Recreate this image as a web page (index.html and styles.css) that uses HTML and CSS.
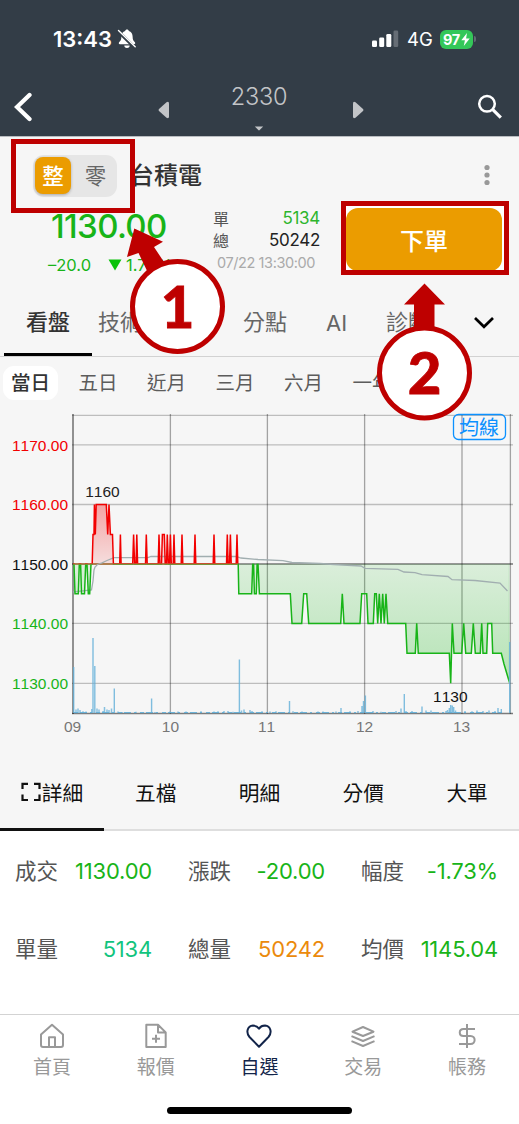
FILE: index.html
```html
<!DOCTYPE html>
<html lang="zh-Hant">
<head>
<meta charset="utf-8">
<meta name="viewport" content="width=device-width, initial-scale=1">
<title>台積電 2330</title>
<link rel="stylesheet" href="styles.css">
</head>
<body>
<div class="app">
  <header class="top">
    <div class="status">
      <span class="clock">13:43</span>
      <svg class="bell" width="20" height="22" viewBox="0 0 20 22"><path d="M10 1.500C11 1.500 11.600 2.100 11.800 2.900 14.300 3.700 15.600 5.800 15.600 8.500 15.600 12 16.600 13 17.900 14.300 18.600 15.200 18.200 16.200 17.100 16.200H2.900C1.800 16.200 1.400 15.200 2.100 14.300 3.400 13 4.400 12 4.400 8.500 4.400 5.800 5.700 3.700 8.200 2.900 8.400 2.100 9 1.500 10 1.500zM7.300 17.500H12.700A2.700 2.500 0 0 1 7.300 17.500z" fill="#fff"/><path d="M.8 3 18 19.800" stroke="#333d47" stroke-width="3.200"/><path d="M1.500 2.500 18.200 18.800" stroke="#fff" stroke-width="1.400" stroke-linecap="round"/></svg>
      <svg class="signal" width="27" height="18" viewBox="0 0 27 18"><g fill="#fff"><rect x="0" y="10.500" width="5" height="6.500" rx="1.300"/><rect x="7.200" y="7.500" width="5" height="9.500" rx="1.300"/><rect x="14.300" y="4" width="5" height="13" rx="1.300"/><rect x="21.500" y=".500" width="4.700" height="16.500" rx="1.300" opacity=".25"/></g></svg>
      <span class="net">4G</span>
      <span class="battery"><span>97</span><svg width="9" height="13" viewBox="0 0 9 13"><path d="M6 0 .3 7.300h3.600L2.800 13 8.700 5.400H5.100z" fill="#fff"/></svg></span>
      <i class="nub"></i>
    </div>
    <div class="nav">
      <svg class="back" width="18" height="30" viewBox="0 0 18 30"><path d="M15.500 3 3 15l12.500 12" fill="none" stroke="#fff" stroke-width="4.300" stroke-linecap="round" stroke-linejoin="miter"/></svg>
      <svg class="prev" width="12" height="18" viewBox="0 0 12 18"><path d="M8.500 1.200 1 8q-1 1 0 2l7.500 6.800q2.500 1.200 2.500-1.200V2.400q0-2.400-2.500-1.200z" fill="#c3c5c8"/></svg>
      <div class="symbol"><span>2330</span><svg width="10" height="5" viewBox="0 0 10 5"><path d="M.8.500h8.400L5.700 4.100q-.7.700-1.400 0z" fill="#c3c5c8"/></svg></div>
      <svg class="next" width="12" height="18" viewBox="0 0 12 18"><path d="M3.500 1.200 11 8q1 1 0 2l-7.500 6.800Q1 18 1 15.600V2.400Q1 0 3.500 1.200z" fill="#c3c5c8"/></svg>
      <svg class="search" width="26" height="26" viewBox="0 0 26 26" fill="none" stroke="#fff"><circle cx="10" cy="9.800" r="7.800" stroke-width="2.500"/><path d="M15.800 15.600 23.800 23.600" stroke-width="3.200"/></svg>
    </div>
  </header>

  <section class="quote">
    <div class="name-row">
      <div class="lot"><span class="lot-on">整</span><span class="lot-off">零</span></div>
      <h1>台積電</h1>
      <svg class="more" width="8" height="22" viewBox="0 0 8 22" fill="#999"><circle cx="4" cy="3.500" r="2.600"/><circle cx="4" cy="11" r="2.600"/><circle cx="4" cy="18.500" r="2.600"/></svg>
    </div>
    <div class="price-row">
      <div class="price">
        <div class="last">1130.00</div>
        <div class="change"><span class="diff">–20.0</span><svg width="14" height="12" viewBox="0 0 14 12"><path d="M.5.500h13L7 11.500z" fill="#0ac20a"/></svg><span>1.73%</span></div>
      </div>
      <div class="volume">
        <div class="vol-line"><span>單</span><b class="green">5134</b></div>
        <div class="vol-line"><span>總</span><b>50242</b></div>
        <div class="stamp">07/22 13:30:00</div>
      </div>
      <div class="order-wrap"><button class="order">下單</button></div>
    </div>
  </section>

  <nav class="tabs">
    <span class="on">看盤</span><span>技術</span><span class="branch">分點</span><span class="ai">AI</span><span class="diagnosis">診斷</span>
    <svg width="22" height="14" viewBox="0 0 22 14"><path d="m2 2 9 8.800L20 2" fill="none" stroke="#000" stroke-width="2.700"/></svg>
  </nav>
  <div class="ranges"><span class="on">當日</span><span>五日</span><span>近月</span><span>三月</span><span>六月</span><span>一年</span></div>

  <svg class="chart" width="519" height="349" viewBox="0 405 519 349">
    <defs>
      <linearGradient id="up" gradientUnits="userSpaceOnUse" x1="0" y1="504" x2="0" y2="564"><stop offset="0" stop-color="#f00000" stop-opacity=".34"/><stop offset="1" stop-color="#f00000" stop-opacity=".1"/></linearGradient>
      <linearGradient id="down" gradientUnits="userSpaceOnUse" x1="0" y1="564" x2="0" y2="683"><stop offset="0" stop-color="#12b412" stop-opacity=".12"/><stop offset="1" stop-color="#12b412" stop-opacity=".29"/></linearGradient>
      <clipPath id="above"><rect x="73" y="400" width="440" height="164"/></clipPath>
      <clipPath id="below"><rect x="73" y="564" width="440" height="150"/></clipPath>
      <path id="trace" d="M73 564H74L75 593.700H78.300L79.300 564H80.600L81.500 593.700H84.500L85.700 564H87L88.300 593.700H89.700L91 564H92.200L93 534.500H94L94.400 504.500 95.300 534.500 96.200 504.500H106.300L107.700 534.500 109 504.500 110.400 534.500H112.500L113.400 564H119.700L120.400 534.500 121.100 564H132.700L133.600 534.500 134.600 564H136L136.800 534.500 137.600 564H145.500L146.300 534.500 147.200 564H158.200L159 534.500 159.900 564H161.500L162.400 534.500H164.300L165.200 564H166.500L167.300 534.500 168.300 564H169.500L170.400 534.500 171.300 564H173.200L174 534.500 174.800 564H181.200L182 534.500 182.800 564H194.200L195 534.500 195.800 564H213.200L214 534.500 214.800 564H226.500L227.300 534.500 228.100 564H229.500L230.400 534.500 231.200 564H236.200L237 534.500 237.800 564H238.200L238.800 593.700H251.700L252.700 564H253.600L254.400 593.700H256.300L257.100 564H258L259.400 593.700H290.300L292 623.400H301.700L303.700 593.700H306.700L308.700 623.400H340.700L342.300 593.700 344 623.400H360L361.700 593.700H366.700L368 623.400H373.300L374.700 593.700H376.300L377.700 623.400 379.300 593.700 381 623.400 382.700 593.700 384.300 623.400 386 593.700 387.700 623.400H405.700L407 653.200H415.300L416.700 623.400 418.300 653.200H449.300L450.700 683.200 452.300 623.400 454 653.200H461.700L463.700 623.400 465.700 653.200H471.300L473.300 623.400 475.300 653.200H480.300L481.700 623.400 483 653.200H486.700L487.700 623.400H491.700L492.700 653.200H501.300L504 664 509.700 683.200V564"/>
    </defs>
    <g stroke="#000" stroke-opacity=".23" stroke-width="1.300">
      <path d="M72 415.300H513M72 444.900H513M72 504.500H513M72 623.400H513M72 683.300H513"/>
      <path d="M170.400 414V714M267.400 414V714M364.600 414V714M462 414V714M510.400 414V714" stroke-opacity=".34"/>
      <path d="M72 564H513" stroke-opacity=".52"/>
      <path d="M73 414V714" stroke-opacity=".55" stroke-width="1.500"/>
      <path d="M72 713.500H513" stroke-opacity=".5"/>
    </g>
    <use href="#trace" fill="url(#up)" clip-path="url(#above)"/>
    <use href="#trace" fill="url(#down)" clip-path="url(#below)"/>
    <path d="M73 564H238" stroke="#b4793a" stroke-width="1.500"/>
    <path d="M73.700 713V667M93 713V638M94.800 713V666M114.300 713V688.500M151.600 713V698.600M239.400 713V659.500M289.500 713V701M341 713V708M362 713V706M363.500 713V701M365.400 713V695.500M401 713V708.500M404.300 713V694M422 713V706.500M449.300 713V708M450.700 713V705M452.300 713V705.500M453.700 713V707M498 713V708M501.300 713V709M509.700 713V642" stroke="#62afd8" stroke-opacity=".8" stroke-width="1.400"/>
    <path d="M76 713V709.500M78 713V708.500M80 713V710M83 713V711.200M86 713V711.400M91.800 713V709M97 713V708.500M99 713V709.500M103 713V711M104.500 713V707M107 713V709.500M109 713V710M111.500 713V708.500M118 713V711.500M122 713V712M136 713V711.700M155 713V712M170 713V711.500M178 713V711.500M186 713V711.500M201 713V711.300M214 713V711.500M218 713V711.300M224 713V711M228 713V711M233 713V711.700M241.500 713V710.500M244 713V709.500M250 713V710M252 713V711M262 713V711.300M270 713V711.500M276 713V711.300M293 713V711.300M302 713V711.500M318 713V711.500M323 713V711.500M336 713V711.500M350 713V711.300M358 713V711M373 713V711M381 713V711.700M396 713V711M406 713V711M412 713V711M426 713V710.500M431 713V710.500M446 713V711M447.500 713V710M455.500 713V710.500M465 713V711M472 713V711.300M477 713V710.500M483 713V711M489 713V710.500M495 713V711" stroke="#62afd8" stroke-opacity=".75" stroke-width="1.500"/>
    <path d="M74 712.600H502" stroke="#62afd8" stroke-width="1" stroke-dasharray="4 2 7 3 2 4"/>
    <path d="M73 592 78 591.300 91.500 590 93 581 94 570 95 567 97.500 564.500 102 562.800 107 560.500 114 557.700H148L151 556.500H236L241 558 258 559.500 283 560.700 292 562.500 320 563.500 334 564.500 361 566 365 568.300 398 569.300 404 572 415 572.700 422 574.700 448 576.500 452 579.700 475 580.500 500 583 507.500 591" fill="none" stroke="#a1aeb0" stroke-width="1.300"/>
    <clipPath id="up-line"><rect x="73" y="500" width="166" height="63.600"/></clipPath>
    <clipPath id="down-line"><path d="M73 564.500H238V563.500H260V564.500H508.900V690H73z"/></clipPath>
    <use href="#trace" fill="none" stroke="#f20000" stroke-width="1.500" clip-path="url(#up-line)"/>
    <use href="#trace" fill="none" stroke="#18b418" stroke-width="1.500" clip-path="url(#down-line)"/>
    <g class="axis" text-anchor="end">
      <text x="68" y="450.500" fill="#f20000">1170.00</text>
      <text x="68" y="510" fill="#f20000">1160.00</text>
      <text x="68" y="569.500" fill="#111">1150.00</text>
      <text x="68" y="629" fill="#18b418">1140.00</text>
      <text x="68" y="688.900" fill="#18b418">1130.00</text>
    </g>
    <g class="axis" text-anchor="middle">
      <text x="102.500" y="497" fill="#222">1160</text>
      <text x="450.300" y="702" fill="#111">1130</text>
      <g fill="#777"><text x="72.500" y="731.800">09</text><text x="170.400" y="731.800">10</text><text x="266.500" y="731.800">11</text><text x="364.500" y="731.800">12</text><text x="461.500" y="731.800">13</text></g>
    </g>
    <rect x="453.500" y="414.500" width="52" height="25" rx="5" fill="none" stroke="#0c91ff" stroke-width="1.300"/>
    <text class="ma" x="479" y="435" text-anchor="middle" fill="#0c91ff">均線</text>
  </svg>

  <nav class="detail-tabs">
    <span class="on"><svg width="20" height="20" viewBox="0 0 20 20"><path d="M7 1.800H1.500V7M13 1.800H18.500V7M1.500 12.500V18H7M18.500 12.500V18H13" fill="none" stroke="#111" stroke-width="2.200"/></svg>詳細</span><span>五檔</span><span>明細</span><span>分價</span><span>大單</span>
  </nav>

  <section class="stats">
    <div><span>成交</span><b>1130.00</b></div>
    <div><span>漲跌</span><b>-20.00</b></div>
    <div><span>幅度</span><b>-1.73%</b></div>
    <div><span>單量</span><b class="teal">5134</b></div>
    <div><span>總量</span><b class="orange">50242</b></div>
    <div><span>均價</span><b>1145.04</b></div>
  </section>

  <footer class="bottom">
    <nav>
      <a><svg width="28" height="26" viewBox="0 0 28 26"><path d="M3 11.500V22q0 2 2 2h18q2 0 2-2V11.500L14 1.800zM11 24V14.200h6V24" stroke-linejoin="round"/></svg>首頁</a>
      <a><svg width="28" height="26" viewBox="0 0 28 26"><path d="M4.300 1.800H16l7.700 7.600V24H4.300zM16 1.800V9.400h7.700M14 11.800v8M10 15.800h8" stroke-linejoin="round"/></svg>報價</a>
      <a class="on"><svg width="28" height="26" viewBox="0 0 28 26"><path d="M14 23.700 4.500 14C.7 9.500 2.300 3 8 2.600c2.800 0 4.600 1 6 3 1.400-2 3.200-3 6-3 5.700.4 7.300 6.900 3.500 11.400z" stroke-linejoin="round"/></svg>自選</a>
      <a><svg width="28" height="26" viewBox="0 0 28 26"><path d="M14 4 24.500 8.700 14 13 3.500 8.700zM2.500 13.200 14 18l11.500-4.800M2.500 18.200 14 23l11.500-4.800" stroke-linejoin="round"/></svg>交易</a>
      <a><svg width="28" height="26" viewBox="0 0 28 26"><path d="M14 1V25M22 6H10.500c-5 0-5 7 0 7h7c5.500 0 5.500 8 0 8H6"/></svg>帳務</a>
    </nav>
    <div class="home-bar"></div>
  </footer>

  <svg class="callouts" width="519" height="300" viewBox="0 135 519 300">
    <g fill="none" stroke="#be0000" stroke-width="5"><rect x="13.500" y="141.500" width="119" height="69"/><rect x="343.500" y="203.500" width="163" height="69"/></g>
    <path d="M134.300 228.500 163 241.700 154 247 166 265 150 277 138.500 253 127 257zM424.500 283.500 445 304.500H434.500V332H414V304.500H404z" fill="#be0000"/>
    <g fill="#fff" stroke="#be0000" stroke-width="5"><circle cx="177.500" cy="306.500" r="45"/><circle cx="424.500" cy="373" r="45"/></g>
    <g class="number"><text x="177.500" y="327.500">1</text><text x="424.500" y="393.500">2</text></g>
  </svg>
</div>
</body>
</html>
```
FILE: styles.css
```css
* { box-sizing: border-box; }
body { margin: 0; background: #f6f6f6; font-family: Inter, "Noto Sans CJK TC", sans-serif; color: #333; }
.app { position: relative; width: 519px; height: 1124px; overflow: hidden; display: flex; flex-direction: column; background: #f6f6f6; }
.app > * { flex: none; }
svg { display: block; flex: none; }
b { font-weight: 400; }

.top { height: 137px; background: #333d47; border-bottom: 1px solid #b9bcc0; color: #fff; }
.status { height: 78px; display: flex; align-items: center; padding-left: 53px; }
.clock { font-size: 22px; font-weight: 600; width: 63.500px; letter-spacing: 0; }
.signal { margin-left: 235.500px; }
.net { font-size: 18.500px; margin-left: 8px; width: 33px; }
.battery { width: 33px; height: 19px; border-radius: 6px; background: #34c759; display: flex; align-items: center; justify-content: center; gap: 1px; font-size: 14.500px; font-weight: 700; letter-spacing: -.3px; }
.nub { width: 2px; height: 6px; border-radius: 0 2px 2px 0; background: #636b73; margin-left: 1px; }
.nav { height: 58px; display: flex; padding-left: 14px; }
.back { margin-top: 14px; }
.prev { margin: 23px 0 0 126px; }
.symbol { width: 56px; margin: 5px 0 0 61px; font-size: 23.500px; font-weight: 300; line-height: 28px; color: #c3c5c8; display: flex; flex-direction: column; align-items: center; gap: 15px; letter-spacing: -.2px; }
.next { margin: 23px 0 0 65px; }
.search { margin: 16px 0 0 113px; }

.quote { height: 153px; padding-top: 18px; }
.name-row { display: flex; align-items: center; height: 42px; padding-left: 33px; }
.lot { width: 84px; height: 42px; border-radius: 11px; background: #e6e6e6; padding: 2px; display: flex; font-size: 21.500px; }
.lot span { height: 37px; line-height: 38px; text-align: center; }
.lot-on { width: 36px; border-radius: 8px; background: #eb9c00; color: #fff; font-weight: 500; box-shadow: 0 1px 3px #0004; }
.lot-off { flex: 1; color: #666; padding-left: 5px; }
h1 { margin: 0 0 0 13px; width: 73px; font-size: 24px; line-height: 30px; font-weight: 500; color: #333; }
.more { margin-left: 280px; margin-bottom: 2px; }
.price-row { display: flex; height: 93px; }
.price { width: 213px; padding-left: 48px; color: #18b418; }
.last { font-size: 33px; line-height: 42px; margin: 8px 0 0 3px; letter-spacing: -.65px; font-weight: 500; }
.change { display: flex; align-items: center; font-size: 16.500px; line-height: 20px; margin-top: 8px; }
.diff { width: 60px; }
.change svg { margin-right: 4px; }
.volume { width: 107px; padding-top: 10px; }
.vol-line { display: flex; justify-content: space-between; align-items: center; height: 22px; font-size: 17px; }
.vol-line span { font-size: 16px; color: #555; }
.vol-line b { color: #222; letter-spacing: -.3px; }
.vol-line b.green { color: #2db52d; }
.stamp { width: 100px; text-align: right; font-size: 14.500px; color: #aaa; letter-spacing: -.4px; line-height: 20px; margin-top: 2px; margin-left: 2px; white-space: nowrap; }
.order-wrap { width: 159px; height: 65px; margin: 9px 0 0 25px; background: #fff; }
.order { display: block; margin: 2px 0 0 1px; width: 156px; height: 63px; border: 0; border-radius: 12px; background: #eb9c00; color: #fff; font: 500 24px/64px Inter, "Noto Sans CJK TC", sans-serif; padding: 2px 0 0; }

.tabs { height: 67px; display: flex; align-items: center; border-bottom: 1px solid #d2d2d2; padding-left: 4px; font-size: 22px; color: #666; }
.tabs span { width: 44px; height: 66px; line-height: 64px; white-space: nowrap; }
.tabs .on { width: 88px; margin-right: 6px; text-align: center; color: #333; font-weight: 500; border-bottom: 3px solid #000; }
.tabs .branch { margin-left: 101px; }
.tabs .ai { width: 22px; margin: 0 38px 0 39px; line-height: 66px; }
.tabs .diagnosis { margin-right: 43px; }
.ranges { height: 48px; display: flex; align-items: center; padding-left: 3px; font-size: 19.500px; color: #5c5c5c; }
.ranges span { width: 55px; height: 34px; line-height: 34px; border-radius: 11px; text-align: center; margin-right: 13.500px; margin-top: 3px; }
.ranges .on { background: #fff; color: #333; font-weight: 500; margin-right: 12.500px; }
.chart { height: 349px; }
.axis { font: 15.500px "Liberation Sans", Arial, sans-serif; font-kerning: none; }
.ma { font: 20px "Noto Sans CJK TC", sans-serif; }

.detail-tabs { height: 77px; display: grid; grid-template-columns: repeat(5, 1fr); border-bottom: 2px solid #dedede; font-size: 20.700px; color: #111; }
.detail-tabs span { display: flex; justify-content: center; align-items: center; height: 76px; }
.detail-tabs .on { height: 77px; border-bottom: 3px solid #111; padding-top: 2px; }
.detail-tabs .on svg { margin-right: 1px; }
.stats { height: 183px; background: #fff; display: grid; grid-template-columns: repeat(3, 173px); grid-template-rows: 79px 77px; }
.stats div { display: flex; justify-content: space-between; align-items: center; padding: 0 21px 0 15px; font-size: 21.500px; color: #18b418; }
.stats span { color: #555; margin-top: -3px; }
.stats b { font-size: 22px; letter-spacing: -.2px; }
.stats .teal { color: #12c47e; }
.stats .orange { color: #eb8a0c; }
.bottom { height: 110px; background: #fff; border-top: 1px solid #d3d3d3; }
.bottom nav { display: grid; grid-template-columns: repeat(5, 1fr); height: 92px; padding-top: 8px; }
.bottom a { display: flex; flex-direction: column; align-items: center; gap: 5px; font-size: 19px; line-height: 28px; color: #999; }
.bottom a svg { fill: none; stroke: currentColor; stroke-width: 2; }
.bottom .on { color: #122449; }
.home-bar { width: 185px; height: 7px; border-radius: 4px; background: #000; margin: 0 auto; }

.callouts { position: absolute; left: 0; top: 135px; }
.number { font: 900 58px Lato, sans-serif; fill: #be0000; stroke: #be0000; stroke-width: .8px; text-anchor: middle; }
```
